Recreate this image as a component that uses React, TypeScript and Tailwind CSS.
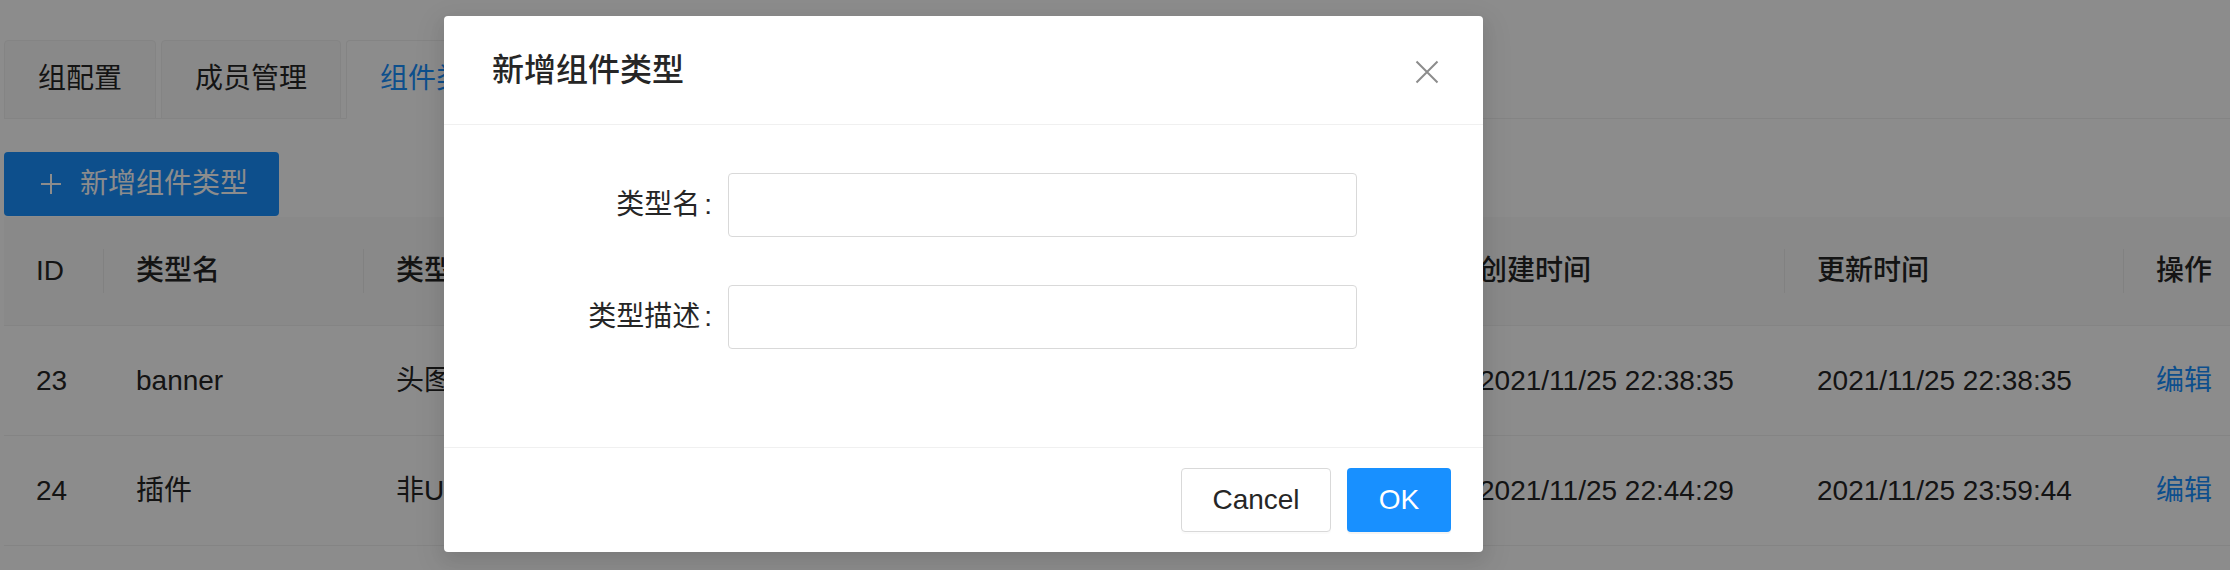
import React from 'react';

interface Row {
  id: number;
  name: string;
  desc: string;
  creator: string;
  createdAt: string;
  updatedAt: string;
}

const rows: Row[] = [
  { id: 23, name: 'banner', desc: '头图组件', creator: 'admin', createdAt: '2021/11/25 22:38:35', updatedAt: '2021/11/25 22:38:35' },
  { id: 24, name: '插件', desc: '非UI组件', creator: 'admin', createdAt: '2021/11/25 22:44:29', updatedAt: '2021/11/25 23:59:44' },
];

const columns = ['ID', '类型名', '类型描述', '创建人', '创建时间', '更新时间', '操作'];

const gridCols = 'grid grid-cols-[100px_260px_636px_447px_338px_339px_150px]';

const App: React.FC = () => {
  return (
    <div className="relative h-[570px] w-[2230px] overflow-hidden bg-white font-[family-name:'Liberation_Sans','Noto_Sans_CJK_SC',sans-serif] text-[#262626]">
      {/* 页面 */}
      <div className="pl-[4px] pt-[40px]">
        {/* 标签页 */}
        <div className="flex gap-[5px] border-b border-[#f0f0f0]">
          <div className="-mb-px h-[79px] rounded-t-[4px] border border-[#f0f0f0] bg-[#fafafa] px-[33px] py-[16px] text-[28px] leading-[44px]">
            组配置
          </div>
          <div className="-mb-px h-[79px] rounded-t-[4px] border border-[#f0f0f0] bg-[#fafafa] px-[33px] py-[16px] text-[28px] leading-[44px]">
            成员管理
          </div>
          <div className="-mb-px h-[79px] rounded-t-[4px] border border-[#f0f0f0] border-b-white bg-white px-[33px] py-[16px] text-[28px] leading-[44px] text-[#1890ff]">
            组件类型
          </div>
        </div>

        {/* 新增按钮 */}
        <button className="mt-[33px] flex h-[64px] w-[275px] items-center gap-[18px] rounded-[4px] bg-[#1890ff] pl-[34px] text-[28px] text-white">
          <svg width="22" height="22" viewBox="0 0 22 22" className="ml-[2px]">
            <path d="M11 1v20M1 11h20" stroke="white" strokeWidth="2" fill="none" />
          </svg>
          <span>新增组件类型</span>
        </button>

        {/* 表格 */}
        <div className="mt-[1px]">
          <div className={`${gridCols} h-[109px] border-b border-[#f0f0f0] bg-[#fafafa]`}>
            {columns.map((c, i) => (
              <div key={c} className="flex items-center pl-[32px] text-[28px] font-medium">
                <span>{c}</span>
                {i < columns.length - 1 && <span className="ml-auto h-[44px] w-px bg-[#ebebeb]" />}
              </div>
            ))}
          </div>
          {rows.map((r) => (
            <div key={r.id} className={`${gridCols} h-[110px] border-b border-[#f0f0f0] text-[28px]`}>
              <div className="flex items-center pl-[32px]">{r.id}</div>
              <div className="flex items-center pl-[32px]">{r.name}</div>
              <div className="flex items-center pl-[32px]">{r.desc}</div>
              <div className="flex items-center pl-[32px]">{r.creator}</div>
              <div className="flex items-center pl-[32px]">{r.createdAt}</div>
              <div className="flex items-center pl-[32px]">{r.updatedAt}</div>
              <div className="flex items-center pl-[32px] text-[#1890ff]">编辑</div>
            </div>
          ))}
        </div>
      </div>

      {/* 遮罩 */}
      <div className="absolute inset-0 bg-black/45" />

      {/* 弹窗 */}
      <div className="absolute left-[444px] top-[16px] w-[1039px] rounded-[4px] bg-white shadow-[0_6px_16px_0_rgba(0,0,0,0.08),0_9px_28px_8px_rgba(0,0,0,0.05)]">
        <div className="flex h-[109px] items-center justify-between border-b border-[#f0f0f0] pl-[48px]">
          <div className="text-[32px] font-medium leading-[44px] text-[#262626]">新增组件类型</div>
          <div className="flex h-[108px] w-[112px] items-center justify-center pt-[4px]">
            <svg width="24" height="24" viewBox="0 0 24 24">
              <path d="M1.5 1.5l21 21M22.5 1.5l-21 21" stroke="#8c8c8c" strokeWidth="2" fill="none" />
            </svg>
          </div>
        </div>

        <div className="px-[48px] pb-[50px] pt-[48px]">
          <div className="mb-[48px] flex items-center">
            <div className="flex w-[236px] justify-end text-[28px] text-[#262626]">
              <span>类型名</span>
              <span className="ml-[4px] mr-[16px]">:</span>
            </div>
            <div className="h-[64px] w-[629px] rounded-[4px] border border-[#d9d9d9] bg-white" />
          </div>
          <div className="mb-[48px] flex items-center">
            <div className="flex w-[236px] justify-end text-[28px] text-[#262626]">
              <span>类型描述</span>
              <span className="ml-[4px] mr-[16px]">:</span>
            </div>
            <div className="h-[64px] w-[629px] rounded-[4px] border border-[#d9d9d9] bg-white" />
          </div>
        </div>

        <div className="flex justify-end gap-[16px] border-t border-[#f0f0f0] px-[32px] py-[20px]">
          <button className="h-[64px] w-[150px] rounded-[4px] border border-[#d9d9d9] bg-white text-[28px] text-[#262626] shadow-[0_2px_0_rgba(0,0,0,0.015)]">
            Cancel
          </button>
          <button className="h-[64px] w-[104px] rounded-[4px] bg-[#1890ff] text-[28px] text-white shadow-[0_2px_0_rgba(0,0,0,0.045)]">
            OK
          </button>
        </div>
      </div>
    </div>
  );
};

export default App;
